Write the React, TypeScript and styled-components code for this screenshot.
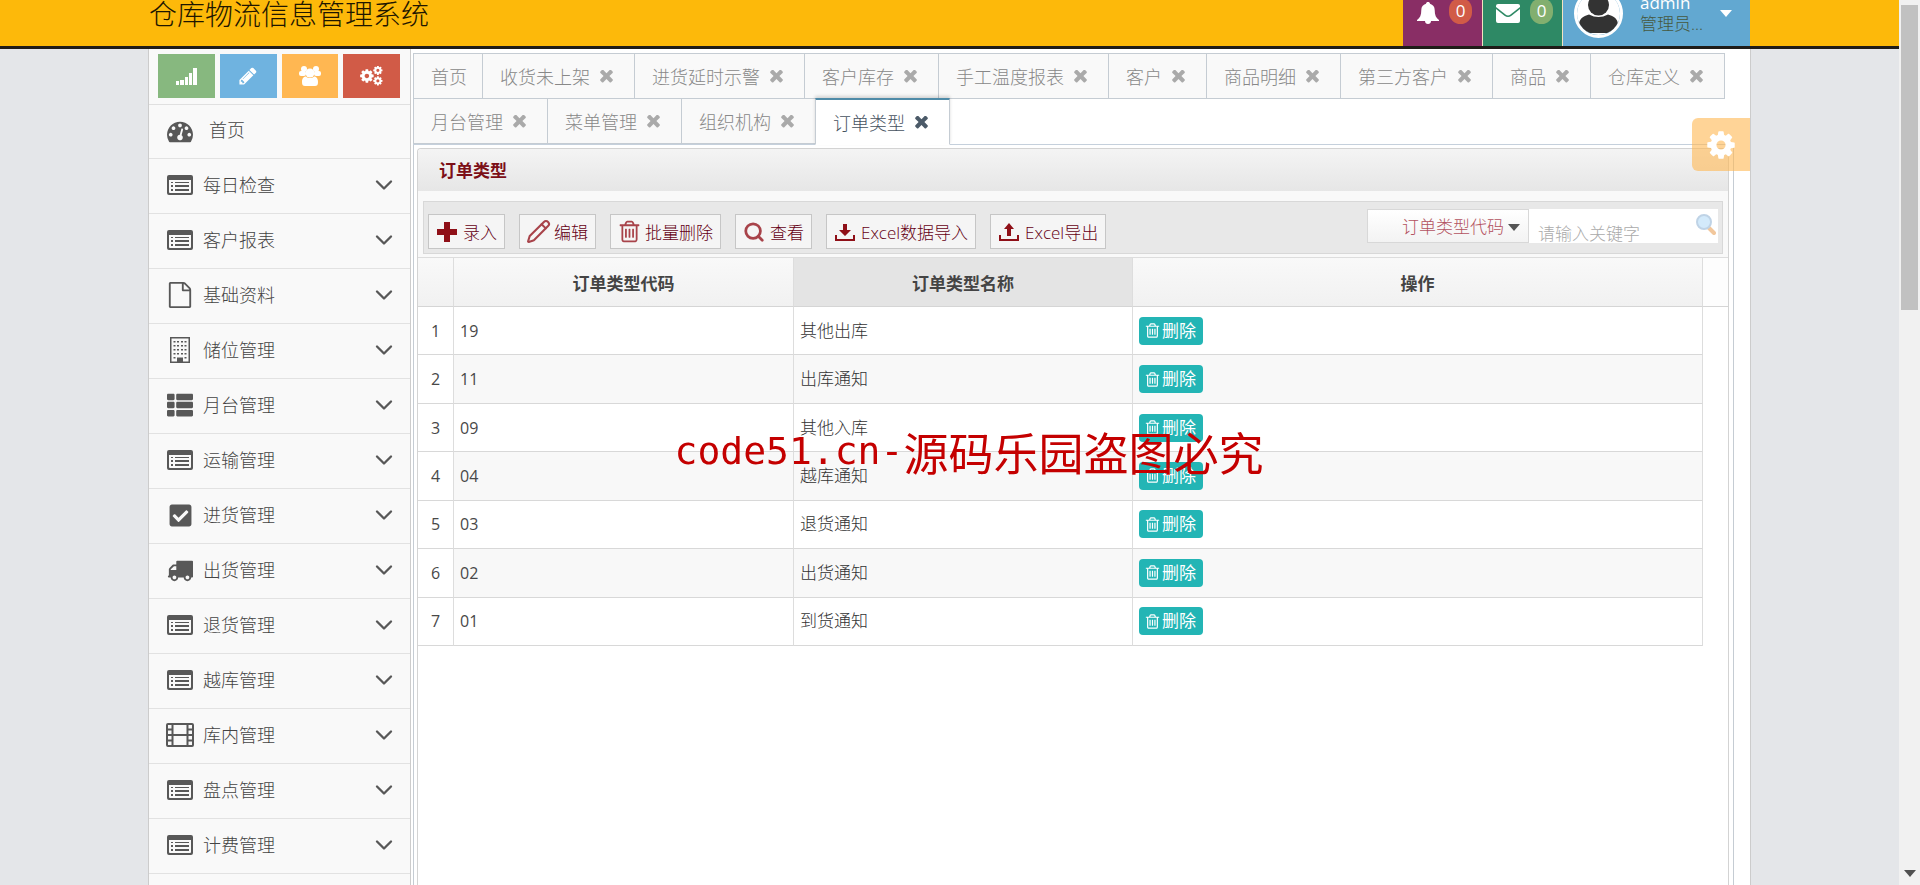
import React from "react";
import styled, { createGlobalStyle, css } from "styled-components";
import { Pencil, Search, ChevronDown } from "lucide-react";
import { FaThList, FaCheckSquare } from "react-icons/fa";

const GlobalStyle = createGlobalStyle`
  *, *::before, *::after { box-sizing: border-box; }
  body {
    margin: 0;
    background: #e4e6e9;
    color: #333;
    font-family: "Open Sans", "Noto Sans CJK SC", sans-serif;
    font-size: 17px;
    font-weight: 300;
  }
  button, input, select { font: inherit; }
  a { color: inherit; text-decoration: none; }
`;

/* ---------- icons ---------- */

const Glyph = ({ size, d, box = "0 0 1792 1792" }: { size: number; d: string; box?: string }) => (
  <svg width={size} height={size} viewBox={box} fill="currentColor" aria-hidden="true">
    <path d={d} />
  </svg>
);

const COG =
  "M1152 896q0-106-75-181t-181-75-181 75-75 181 75 181 181 75 181-75 75-181zm512-109v222q0 12-8 23t-20 13l-185 28q-19 54-39 91 35 50 107 138 10 12 10 25t-9 23q-27 37-99 108t-94 71q-12 0-26-9l-138-108q-44 23-91 38-16 136-29 186-7 28-36 28h-222q-14 0-24.5-8.5t-11.5-21.5l-28-184q-49-16-90-37l-141 107q-10 9-25 9-14 0-25-11-126-114-165-168-7-10-7-23 0-12 8-23 15-21 51-66.5t54-70.5q-27-50-41-99l-183-27q-13-2-21-12.5t-8-23.5v-222q0-12 8-23t19-13l186-28q14-46 39-92-40-57-107-138-10-12-10-24 0-10 9-23 26-36 98.5-107.5t94.5-71.5q13 0 26 10l138 107q44-23 91-38 16-136 29-186 7-28 36-28h222q14 0 24.5 8.5t11.5 21.5l28 184q49 16 90 37l142-107q9-9 24-9 13 0 25 10 129 119 165 170 7 8 7 22 0 12-8 23-15 21-51 66.5t-54 70.5q26 50 41 98l183 28q13 2 21 12.5t8 23.5z";
const TIMES =
  "M1490 1322q0 40-28 68l-136 136q-28 28-68 28t-68-28l-294-294-294 294q-28 28-68 28t-68-28l-136-136q-28-28-28-68t28-68l294-294-294-294q-28-28-28-68t28-68l136-136q28-28 68-28t68 28l294 294 294-294q28-28 68-28t68 28l136 136q28 28 28 68t-28 68l-294 294 294 294q28 28 28 68z";
const DASHBOARD =
  "M384 1152q0-53-37.5-90.5t-90.5-37.5-90.5 37.5-37.5 90.5 37.5 90.5 90.5 37.5 90.5-37.5 37.5-90.5zm192-448q0-53-37.5-90.5t-90.5-37.5-90.5 37.5-37.5 90.5 37.5 90.5 90.5 37.5 90.5-37.5 37.5-90.5zm428 481l101-382q6-26-7.5-48.5t-38.5-29.5-48 6.5-30 39.5l-101 382q-60 5-107 43.5t-63 98.5q-20 77 20 146t117 89 146-20 89-117q16-60-6-117t-72-91zm660-33q0-53-37.5-90.5t-90.5-37.5-90.5 37.5-37.5 90.5 37.5 90.5 90.5 37.5 90.5-37.5 37.5-90.5zm-640-640q0-53-37.5-90.5t-90.5-37.5-90.5 37.5-37.5 90.5 37.5 90.5 90.5 37.5 90.5-37.5 37.5-90.5zm448 192q0-53-37.5-90.5t-90.5-37.5-90.5 37.5-37.5 90.5 37.5 90.5 90.5 37.5 90.5-37.5 37.5-90.5zm320 448q0 261-141 483-19 29-54 29h-1402q-35 0-54-29-141-221-141-483 0-182 71-348t191-286 286-191 348-71 348 71 286 191 191 286 71 348z";
const FILE =
  "M1596 380q28 28 48 76t20 88v1152q0 40-28 68t-68 28h-1344q-40 0-68-28t-28-68v-1600q0-40 28-68t68-28h896q40 0 88 20t76 48zm-444-244v376h376q-10-29-22-41l-313-313q-12-12-41-22zm384 1528v-1024h-416q-40 0-68-28t-28-68v-416h-768v1536h1280z";
const TRUCK =
  "M640 1408q0-52-38-90t-90-38-90 38-38 90 38 90 90 38 90-38 38-90zm-384-512h384v-256h-158q-13 0-22 9l-195 195q-9 9-9 22v30zm1280 512q0-52-38-90t-90-38-90 38-38 90 38 90 90 38 90-38 38-90zm256-1088v1024q0 15-4 26.5t-13.5 18.5-16.5 11.5-23.5 6-22.5 2-25.5 0-22.5-.5q0 106-75 181t-181 75-181-75-75-181h-384q0 106-75 181t-181 75-181-75-75-181h-64q-3 0-22.5.5t-25.5 0-22.5-2-23.5-6-16.5-11.5-13.5-18.5-4-26.5q0-26 19-45t45-19v-320q0-8-.5-35t0-38 2.5-34.5 6.5-37 14-30.5 22.5-30l198-198q19-19 50.5-32t58.5-13h160v-192q0-26 19-45t45-19h1024q26 0 45 19t19 45z";
const TRASH =
  "M704 736v576q0 14-9 23t-23 9h-64q-14 0-23-9t-9-23v-576q0-14 9-23t23-9h64q14 0 23 9t9 23zm256 0v576q0 14-9 23t-23 9h-64q-14 0-23-9t-9-23v-576q0-14 9-23t23-9h64q14 0 23 9t9 23zm256 0v576q0 14-9 23t-23 9h-64q-14 0-23-9t-9-23v-576q0-14 9-23t23-9h64q14 0 23 9t9 23zm128 724v-948h-896v948q0 22 7 40.5t14.5 27 10.5 8.5h832q3 0 10.5-8.5t14.5-27 7-40.5zm-672-1076h448l-48-117q-7-9-17-11h-317q-10 2-17 11zm928 32v64q0 14-9 23t-23 9h-96v948q0 83-47 143.5t-113 60.5h-832q-66 0-113-58.5t-47-141.5v-952h-96q-14 0-23-9t-9-23v-64q0-14 9-23t23-9h309l70-167q15-37 54-63t79-26h320q40 0 79 26t54 63l70 167h309q14 0 23 9t9 23z";
const PENCIL =
  "M491 1536l91-91-235-235-91 91v107h128v128h107zm523-928q0-22-22-22-10 0-17 7l-542 542q-7 7-7 17 0 22 22 22 10 0 17-7l542-542q7-7 7-17zm-54-192l416 416-832 832h-416v-416zm683 96q0 53-37 90l-166 166-416-416 166-165q36-38 90-38 53 0 91 38l235 234q37 39 37 91z";
const PLUS = "M7 0h6v7h7v6h-7v7H7v-7H0V7h7z";

const ListAltIcon = () => (
  <svg width="26" height="20" viewBox="0 0 26 20" fill="currentColor" aria-hidden="true">
    <path fillRule="evenodd" d="M2 0h22a2 2 0 0 1 2 2v16a2 2 0 0 1-2 2H2a2 2 0 0 1-2-2V2a2 2 0 0 1 2-2zm0 5v12a1 1 0 0 0 1 1h20a1 1 0 0 0 1-1V5z" />
    <path d="M4 7h2v1H4zM8 7h14v1H8zM4 10h2v2H4zM8 10h14v2H8zM4 14h2v2H4zM8 14h14v2H8z" />
  </svg>
);

const BuildingIcon = () => (
  <svg width="20" height="26" viewBox="0 0 20 26" fill="currentColor" aria-hidden="true">
    <path fillRule="evenodd" d="M0 0h20v26H0zM1.500 1.500v23h17v-23z" />
    {[4, 8, 12, 16].map((y) => (
      <path key={y} d={`M3.500 ${y}h2v1.500h-2zM7 ${y}h2v1.500h-2zM11 ${y}h2v1.500h-2zM14.500 ${y}h2v1.500h-2z`} />
    ))}
    <path d="M3.500 20h2v1.500h-2zM14.500 20h2v1.500h-2zM7 20.500h6V26H7z" />
  </svg>
);

const FilmIcon = () => (
  <svg width="28" height="24" viewBox="0 0 28 24" fill="none" stroke="currentColor" strokeWidth="2" aria-hidden="true">
    <rect x="1" y="1" width="26" height="22" rx="1" />
    <path d="M6.500 1v22M21.500 1v22M6.500 12h15M1 6.500h5.500M1 12h5.500M1 17.500h5.500M21.500 6.500H27M21.500 12H27M21.500 17.500H27" />
  </svg>
);

const SignalIcon = () => (
  <svg width="21" height="18" viewBox="0 0 21 18" fill="currentColor" aria-hidden="true">
    <path d="M0 14h3v4H0zM4 13h4v5H4zM9 10h3v8H9zM13 6h3v12h-3zM17 1h4v17h-4z" />
  </svg>
);

const UsersIcon = () => (
  <svg width="22" height="20" viewBox="0 0 22 20" fill="currentColor" aria-hidden="true">
    <circle cx="5" cy="3" r="3" />
    <circle cx="17" cy="3" r="3" />
    <rect x="0" y="5" width="7" height="5" rx="2" />
    <rect x="15" y="5" width="7" height="5" rx="2" />
    <circle cx="11" cy="7" r="4.500" />
    <path d="M3 16c0-4 2-5.500 4-5.500 1 1 2.500 1.500 4 1.500s3-.5 4-1.500c2 0 4 1.500 4 5.500 0 3-1 4-3 4H6c-2 0-3-1-3-4z" />
  </svg>
);

const CogsIcon = () => (
  <svg width="23" height="20" viewBox="0 0 23 20" fill="currentColor" aria-hidden="true">
    <g transform="translate(-1 2) scale(.0088)"><path d={COG} /></g>
    <g transform="translate(12.500 -1) scale(.006)"><path d={COG} /></g>
    <g transform="translate(12.500 9.500) scale(.006)"><path d={COG} /></g>
  </svg>
);

const BellIcon = () => (
  <svg width="22" height="22" viewBox="0 0 22 22" fill="currentColor" aria-hidden="true">
    <path d="M11 0c1 0 2 .6 2 1.700 3 .8 4.700 3.200 4.700 6.300 0 5 1.300 8 4.300 10v1H0v-1c3-2 4.300-5 4.300-10C4.300 4.900 6 2.500 9 1.700 9 .6 10 0 11 0zM8 19h6c0 2-1.300 3-3 3s-3-1-3-3z" />
  </svg>
);

const EnvelopeIcon = () => (
  <svg width="24" height="19" viewBox="0 0 24 19" fill="currentColor" aria-hidden="true">
    <path d="M0 2a2 2 0 0 1 2-2h20a2 2 0 0 1 2 2v1L14.500 10.500q-2.500 1.800-5 0L0 3z" />
    <path d="M0 5l8.500 6.800q3.500 2.500 7 0L24 5v12a2 2 0 0 1-2 2H2a2 2 0 0 1-2-2z" />
  </svg>
);

const AvatarPicture = () => (
  <svg width="43" height="43" viewBox="0 0 43 43" aria-hidden="true">
    <rect width="43" height="43" fill="#fff" />
    <circle cx="21.500" cy="13" r="10.500" fill="#333" />
    <path d="M2 43V33c0-6 4-9 10-10.500q9.500 5 19 0c6 1.500 10 4.500 10 10.500v5q-4 3-9 3H11q-5 0-9-3z" fill="#333" />
  </svg>
);

const TransferIcon = ({ up }: { up?: boolean }) => (
  <svg width="20" height="20" viewBox="0 0 20 20" fill="currentColor" aria-hidden="true">
    <path d="M0 13h2v4h16v-4h2v6H0z" />
    <path d={up ? "M10 1l5 6h-3v7H8V7H5z" : "M8 2h4v6h4l-6 6-6-6h4z"} />
  </svg>
);

const LensIcon = () => (
  <svg width="20" height="21" viewBox="0 0 20 21" aria-hidden="true">
    <path d="M13 14l5 5" stroke="#f2c79c" strokeWidth="4" strokeLinecap="round" />
    <circle cx="8" cy="8" r="7" fill="#d3eafb" stroke="#bfd3e6" strokeWidth="2" />
  </svg>
);

/* ---------- window frame ---------- */

const Window = styled.div`
  display: flex;
  height: 100vh;
  overflow: hidden;
`;

const Page = styled.div`
  flex: 1;
  min-width: 0;
  display: flex;
  flex-direction: column;
`;

const ScrollTrack = styled.div`
  width: 21px;
  padding: 5px 2px 8px;
  background: #f1f1f1;
  display: flex;
  flex-direction: column;
  align-items: center;
  justify-content: space-between;
`;

const ScrollThumb = styled.div`
  width: 100%;
  height: 35%;
  background: #c1c1c1;
`;

const Caret = styled.span<{ $color: string }>`
  width: 0;
  height: 0;
  border: 6px solid transparent;
  border-top: 7px solid ${(p) => p.$color};
  border-bottom: 0;
`;

/* ---------- top bar ---------- */

const TopBar = styled.header`
  height: 49px;
  flex: none;
  overflow: hidden;
  padding: 0 149px;
  background: #fdb90a;
  border-bottom: 3px solid #1f1c18;
  display: flex;
  align-items: flex-end;
  justify-content: space-between;
`;

const Brand = styled.h1`
  margin: 0;
  font-size: 28px;
  line-height: 64px;
  font-weight: 300;
  color: #1e1600;
`;

const UserNav = styled.nav`
  display: flex;
  height: 66px;
`;

const NavTile = styled.a<{ $bg: string }>`
  display: flex;
  align-items: center;
  justify-content: center;
  gap: 10px;
  width: 80px;
  padding-left: 4px;
  border-right: 1px solid #f3e3c0;
  background: ${(p) => p.$bg};
  color: #fff;
`;

const Badge = styled.span<{ $bg: string }>`
  width: 23px;
  margin-bottom: 4px;
  line-height: 26px;
  border-radius: 13px;
  text-align: center;
  font-weight: 400;
  background: ${(p) => p.$bg};
`;

const UserTile = styled.a`
  display: flex;
  align-items: center;
  width: 187px;
  padding: 0 18px 0 11px;
  background: #62a8d1;
  color: #fff;
`;

const Avatar = styled.span`
  display: flex;
  overflow: hidden;
  border: 3px solid #fff;
  border-radius: 50%;
`;

const UserText = styled.span`
  display: flex;
  flex-direction: column;
  flex: 1;
  padding-left: 17px;
  line-height: 21px;
  font-weight: 400;
`;

const Role = styled.span`
  color: #46583f;
  font-weight: 300;
`;

/* ---------- body ---------- */

const Body = styled.div`
  position: relative;
  flex: 1;
  min-height: 0;
  display: flex;
  margin: 0 149px;
  background: #fff;
  box-shadow: -1px 0 #ccc, 1px 0 #ccc;
`;

const Sidebar = styled.aside`
  width: 262px;
  flex: none;
  overflow: hidden;
  background: #f9f9f9;
  border-right: 1px solid #ccc;
`;

const Shortcuts = styled.div`
  display: grid;
  grid-template-columns: repeat(4, 1fr);
  gap: 5px;
  height: 56px;
  padding: 5px 10px 6px 9px;
  border-bottom: 1px solid #e0e0e0;
`;

const Shortcut = styled.button<{ $bg: string }>`
  display: flex;
  align-items: center;
  justify-content: center;
  padding: 0;
  border: 0;
  color: #fff;
  background: ${(p) => p.$bg};
`;

const Menu = styled.ul`
  margin: 0;
  padding: 0;
  list-style: none;
`;

const MenuLink = styled.a<{ $home?: boolean }>`
  display: flex;
  align-items: center;
  gap: ${(p) => (p.$home ? 15 : 9)}px;
  height: ${(p) => (p.$home ? 54 : 55)}px;
  padding: 0 12px 2px 17px;
  border-bottom: 1px solid #e2e2e2;
  color: #444;
  font-size: 18px;
`;

const MenuIcon = styled.span`
  display: flex;
  justify-content: center;
  width: 28px;
  color: #585858;
`;

const MenuLabel = styled.span`
  flex: 1;
  padding-bottom: 3px;
`;

const Main = styled.main`
  flex: 1;
  min-width: 0;
  display: flex;
  flex-direction: column;
  padding: 4px 16px 0 2px;
`;

const TabList = styled.div`
  display: flex;
  flex-direction: column;
`;

const TabRow = styled.div<{ $last?: boolean }>`
  display: flex;
  ${(p) =>
    p.$last
      ? css`
          border-bottom: 1px solid #c5d0dc;
        `
      : css`
          margin-bottom: -1px;
        `}
`;

const Tab = styled.div<{ $active?: boolean; $pinned?: boolean }>`
  display: flex;
  align-items: center;
  gap: 10px;
  height: 46px;
  margin-right: -1px;
  padding: 0 ${(p) => (p.$pinned ? 15 : 21)}px 0 17px;
  border: 1px solid #c5ccd3;
  background: #f9f9f9;
  color: #888;
  font-size: 18px;
  ${(p) =>
    p.$active &&
    css`
      position: relative;
      z-index: 1;
      margin-bottom: -1px;
      height: 47px;
      border-top: 2px solid #4f8ba8;
      border-bottom-color: #fff;
      background: #fff;
      color: #46525f;
      box-shadow: 0 -2px 3px rgba(0, 0, 0, 0.15);
    `}
`;

const CloseButton = styled.button<{ $active?: boolean }>`
  display: flex;
  padding: 0;
  border: 0;
  background: none;
  color: ${(p) => (p.$active ? "#4b5a68" : "#aaa")};
`;

const Workspace = styled.div`
  flex: 1;
  min-height: 0;
  padding: 3px 4px 0 3px;
  border: solid #c5ccd3;
  border-width: 0 1px;
`;

const Panel = styled.section`
  height: 100%;
  border: 1px solid #d3d3d3;
  border-bottom: 0;
  border-radius: 4px 0 0 0;
`;

const PanelTitle = styled.h2`
  margin: 0;
  height: 42px;
  padding-left: 21px;
  line-height: 44px;
  font-size: 17px;
  font-weight: 700;
  color: #7c0f17;
  background: linear-gradient(#f4f4f4, #e6e6e6);
  border-radius: 4px 0 0 0;
`;

const ToolbarArea = styled.div`
  padding: 10px 5px 3px;
  background: #f9f9f9;
`;

const Toolbar = styled.div`
  display: flex;
  align-items: flex-end;
  justify-content: space-between;
  height: 53px;
  padding: 0 4px 4px;
  border: 1px solid #d8d8d8;
  background: #e8e8e8;
`;

const ButtonRow = styled.div`
  display: flex;
  gap: 14px;
`;

const ToolButton = styled.button`
  display: flex;
  align-items: center;
  gap: 6px;
  height: 35px;
  padding: 0 7px 0 8px;
  border: 1px solid #c6c6c6;
  background: #f5f5f5;
  color: #650014;
  white-space: nowrap;
`;

const ToolIcon = styled.span<{ $soft?: boolean }>`
  display: flex;
  justify-content: center;
  width: 20px;
  color: ${(p) => (p.$soft ? "#a8434a" : "#8f1018")};

  svg {
    flex: none;
  }
`;

const SearchBox = styled.div`
  display: flex;
  height: 34px;
  margin-bottom: 6px;
`;

const SelectWrap = styled.span`
  position: relative;
  display: flex;
  width: 162px;
  border: 1px solid #d8d8d8;
  background: linear-gradient(#fff, #f3f3f3);

  ${Caret} {
    position: absolute;
    right: 8px;
    top: 14px;
    pointer-events: none;
  }
`;

const FieldSelect = styled.select`
  flex: 1;
  padding: 0 26px 0 34px;
  border: 0;
  appearance: none;
  background: none;
  color: #b35260;
`;

const KeywordWrap = styled.span`
  display: flex;
  width: 189px;
  padding: 5px 2px 0 9px;
  background: #fff;
`;

const KeywordInput = styled.input`
  flex: 1;
  min-width: 0;
  height: 38px;
  padding: 0;
  border: 0;
  outline: 0;
  background: none;
  &::placeholder {
    color: #aaa;
  }
`;

const IconButton = styled.button`
  height: 21px;
  padding: 0;
  border: 0;
  background: none;
`;

/* ---------- grid ---------- */

const Grid = styled.table`
  width: 100%;
  height: 389px;
  table-layout: fixed;
  border-collapse: separate;
  border-spacing: 0;
  border-top: 1px solid #ddd;
`;

const HeadCell = styled.th<{ $hover?: boolean; $filler?: boolean }>`
  height: 49px;
  padding: 0;
  border-right: 1px solid #ddd;
  border-bottom: 1px solid #d5d5d5;
  background: ${(p) => (p.$hover ? "#e4e4e4" : "linear-gradient(#f9f9f9, #f1f1f1)")};
  color: #444;
  font-weight: 700;
  ${(p) =>
    p.$filler &&
    css`
      border-right: 0;
      background: #fdfdfd;
    `}
`;

const Cell = styled.td<{ $index?: boolean; $numeric?: boolean }>`
  height: 48px;
  padding: ${(p) => (p.$index ? "0" : "0 6px")};
  border-right: 1px solid #ddd;
  border-bottom: 1px solid #d8d8d8;
  text-align: ${(p) => (p.$index ? "center" : "left")};
  vertical-align: middle;
  line-height: 24px;
  ${(p) =>
    (p.$index || p.$numeric) &&
    css`
      font-size: 16px;
      font-weight: 400;
      color: #484848;
    `}
`;

const FillerCell = styled.td`
  padding: 0;
`;

const Row = styled.tr`
  &:nth-child(even) ${Cell}:not(:first-child) {
    background: #f8f8f8;
  }
`;

const DeleteButton = styled.button`
  display: flex;
  align-items: center;
  gap: 1px;
  height: 28px;
  padding: 0 7px 0 5px;
  border: 0;
  border-radius: 4px;
  background: #23b5b5;
  color: #fff;
  font-weight: 400;
`;

/* ---------- overlays ---------- */

const SettingsButton = styled.button`
  position: absolute;
  z-index: 2;
  top: 69px;
  right: 0;
  display: flex;
  align-items: center;
  justify-content: center;
  width: 58px;
  height: 53px;
  padding: 0;
  border: 0;
  border-radius: 6px 0 0 6px;
  background: rgba(255, 183, 82, 0.6);
  color: #fff;
`;

const Watermark = styled.div`
  position: fixed;
  z-index: 3;
  inset: 0;
  display: flex;
  align-items: center;
  justify-content: center;
  padding: 17px 0 0 18px;
  pointer-events: none;
  white-space: nowrap;
  color: #c40000;
  font-size: 45px;
  font-weight: 400;
`;

const WatermarkSite = styled.span`
  font-family: "DejaVu Sans Mono", monospace;
  font-size: 38px;
`;

/* ---------- data ---------- */

const listIcon = <ListAltIcon />;

const menu: { label: string; icon: React.ReactNode }[] = [
  { label: "每日检查", icon: listIcon },
  { label: "客户报表", icon: listIcon },
  { label: "基础资料", icon: <Glyph size={26} d={FILE} /> },
  { label: "储位管理", icon: <BuildingIcon /> },
  { label: "月台管理", icon: <FaThList size={26} /> },
  { label: "运输管理", icon: listIcon },
  { label: "进货管理", icon: <FaCheckSquare size={25} /> },
  { label: "出货管理", icon: <Glyph size={26} d={TRUCK} /> },
  { label: "退货管理", icon: listIcon },
  { label: "越库管理", icon: listIcon },
  { label: "库内管理", icon: <FilmIcon /> },
  { label: "盘点管理", icon: listIcon },
  { label: "计费管理", icon: listIcon },
];

const tabRows = [
  ["首页", "收货未上架", "进货延时示警", "客户库存", "手工温度报表", "客户", "商品明细", "第三方客户", "商品", "仓库定义"],
  ["月台管理", "菜单管理", "组织机构", "订单类型"],
];

const tools: { label: string; soft?: boolean; icon: React.ReactNode }[] = [
  { label: "录入", icon: <Glyph size={20} d={PLUS} box="0 0 20 20" /> },
  { label: "编辑", soft: true, icon: <Pencil size={25} /> },
  { label: "批量删除", soft: true, icon: <Glyph size={25} d={TRASH} /> },
  { label: "查看", soft: true, icon: <Search size={22} strokeWidth={3} /> },
  { label: "Excel数据导入", icon: <TransferIcon /> },
  { label: "Excel导出", icon: <TransferIcon up /> },
];

const rows = [
  ["19", "其他出库"],
  ["11", "出库通知"],
  ["09", "其他入库"],
  ["04", "越库通知"],
  ["03", "退货通知"],
  ["02", "出货通知"],
  ["01", "到货通知"],
];

export default function App() {
  return (
    <>
      <GlobalStyle />
      <Window>
        <Page>
          <TopBar>
            <Brand>仓库物流信息管理系统</Brand>
            <UserNav>
              <NavTile href="#notices" $bg="#892e65" aria-label="通知">
                <BellIcon />
                <Badge $bg="#d15b47">0</Badge>
              </NavTile>
              <NavTile href="#mail" $bg="#2e8965" aria-label="邮件">
                <EnvelopeIcon />
                <Badge $bg="#82af6f">0</Badge>
              </NavTile>
              <UserTile href="#user">
                <Avatar>
                  <AvatarPicture />
                </Avatar>
                <UserText>
                  <span>admin</span>
                  <Role>管理员...</Role>
                </UserText>
                <Caret $color="#fff" />
              </UserTile>
            </UserNav>
          </TopBar>

          <Body>
            <Sidebar>
              <Shortcuts>
                <Shortcut $bg="#87b87f" aria-label="统计"><SignalIcon /></Shortcut>
                <Shortcut $bg="#6fb3e0" aria-label="编辑"><Glyph size={20} d={PENCIL} /></Shortcut>
                <Shortcut $bg="#ffb752" aria-label="用户"><UsersIcon /></Shortcut>
                <Shortcut $bg="#d15b47" aria-label="设置"><CogsIcon /></Shortcut>
              </Shortcuts>
              <Menu>
                <li>
                  <MenuLink href="#home" $home>
                    <MenuIcon><Glyph size={26} d={DASHBOARD} /></MenuIcon>
                    <MenuLabel>首页</MenuLabel>
                  </MenuLink>
                </li>
                {menu.map((m) => (
                  <li key={m.label}>
                    <MenuLink href="#menu">
                      <MenuIcon>{m.icon}</MenuIcon>
                      <MenuLabel>{m.label}</MenuLabel>
                      <ChevronDown size={28} strokeWidth={2} color="#585858" />
                    </MenuLink>
                  </li>
                ))}
              </Menu>
            </Sidebar>

            <Main>
              <TabList>
                {tabRows.map((labels, r) => (
                  <TabRow key={r} $last={r === 1}>
                    {labels.map((label) => {
                      const active = label === "订单类型";
                      const pinned = label === "首页";
                      return (
                        <Tab key={label} $active={active} $pinned={pinned}>
                          <a href="#tab">{label}</a>
                          {!pinned && (
                            <CloseButton $active={active} aria-label={`关闭${label}`}>
                              <Glyph size={13} d={TIMES} box="288 388 1216 1216" />
                            </CloseButton>
                          )}
                        </Tab>
                      );
                    })}
                  </TabRow>
                ))}
              </TabList>

              <Workspace>
                <Panel>
                  <PanelTitle>订单类型</PanelTitle>
                  <ToolbarArea>
                    <Toolbar>
                      <ButtonRow>
                        {tools.map((t) => (
                          <ToolButton key={t.label}>
                            <ToolIcon $soft={t.soft}>{t.icon}</ToolIcon>
                            {t.label}
                          </ToolButton>
                        ))}
                      </ButtonRow>
                      <SearchBox>
                        <SelectWrap>
                          <FieldSelect aria-label="查询字段">
                            <option>订单类型代码</option>
                            <option>订单类型名称</option>
                          </FieldSelect>
                          <Caret $color="#555" />
                        </SelectWrap>
                        <KeywordWrap>
                          <KeywordInput aria-label="关键字" placeholder="请输入关键字" />
                          <IconButton aria-label="搜索"><LensIcon /></IconButton>
                        </KeywordWrap>
                      </SearchBox>
                    </Toolbar>
                  </ToolbarArea>
                  <Grid>
                    <colgroup>
                      <col width="36" />
                      <col width="340" />
                      <col width="339" />
                      <col />
                      <col width="25" />
                    </colgroup>
                    <thead>
                      <tr>
                        <HeadCell />
                        <HeadCell>订单类型代码</HeadCell>
                        <HeadCell $hover>订单类型名称</HeadCell>
                        <HeadCell>操作</HeadCell>
                        <HeadCell $filler />
                      </tr>
                    </thead>
                    <tbody>
                      {rows.map(([code, name], i) => (
                        <Row key={code}>
                          <Cell $index>{i + 1}</Cell>
                          <Cell $numeric>{code}</Cell>
                          <Cell>{name}</Cell>
                          <Cell>
                            <DeleteButton>
                              <Glyph size={17} d={TRASH} />
                              删除
                            </DeleteButton>
                          </Cell>
                          <FillerCell />
                        </Row>
                      ))}
                    </tbody>
                  </Grid>
                </Panel>
              </Workspace>
            </Main>

            <SettingsButton aria-label="页面设置">
              <Glyph size={32} d={COG} />
            </SettingsButton>
          </Body>
        </Page>
        <ScrollTrack aria-hidden="true">
          <ScrollThumb />
          <Caret $color="#505050" />
        </ScrollTrack>
      </Window>
      <Watermark>
        <WatermarkSite>code51.cn-</WatermarkSite>源码乐园盗图必究
      </Watermark>
    </>
  );
}
